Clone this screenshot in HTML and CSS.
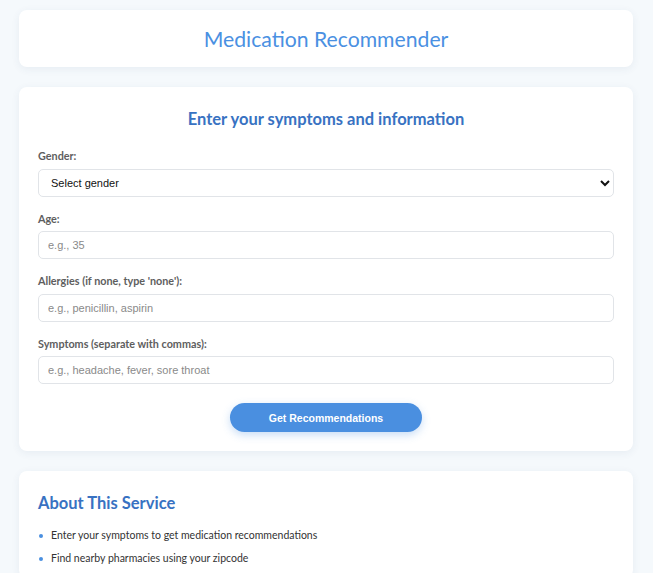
FILE: index.html
```html
<!DOCTYPE html>
<html lang="en">
<head>
<meta charset="utf-8">
<title>Medication Recommender</title>
<link rel="stylesheet" href="styles.css">
</head>
<body>
<div class="page">
  <header class="card header-card">
    <h1 class="title">Medication Recommender</h1>
  </header>

  <section class="card form-card">
    <h2 class="form-heading">Enter your symptoms and information</h2>
    <form class="form">
      <div class="group">
        <label class="label" for="gender">Gender:</label>
        <select class="field select" id="gender">
          <option>Select gender</option>
          <option>Male</option>
          <option>Female</option>
          <option>Other</option>
        </select>
      </div>
      <div class="group">
        <label class="label" for="age">Age:</label>
        <input class="field" id="age" type="text" placeholder="e.g., 35">
      </div>
      <div class="group">
        <label class="label" for="allergies">Allergies (if none, type 'none'):</label>
        <input class="field" id="allergies" type="text" placeholder="e.g., penicillin, aspirin">
      </div>
      <div class="group">
        <label class="label" for="symptoms">Symptoms (separate with commas):</label>
        <input class="field" id="symptoms" type="text" placeholder="e.g., headache, fever, sore throat">
      </div>
      <div class="actions">
        <button class="btn" type="button">Get Recommendations</button>
      </div>
    </form>
  </section>

  <section class="card about-card">
    <h2 class="about-heading">About This Service</h2>
    <ul class="list">
      <li>Enter your symptoms to get medication recommendations</li>
      <li>Find nearby pharmacies using your zipcode</li>
    </ul>
  </section>
</div>
</body>
</html>
```

FILE: styles.css
```css
* { box-sizing: border-box; }

html, body {
  margin: 0;
  padding: 0;
  background: #f5f9fc;
}

body {
  font-family: Lato, "Noto Sans", sans-serif;
  color: #333;
}

.page {
  padding: 10px 20px 20px 19px;
  display: flex;
  flex-direction: column;
  gap: 20px;
}

.card {
  background: #ffffff;
  border-radius: 8px;
  box-shadow: 0 2px 8px rgba(40, 70, 110, 0.07);
}

.header-card {
  height: 57px;
  display: flex;
  align-items: center;
  justify-content: center;
}

.title {
  margin: 0;
  font-size: 21.2px;
  font-weight: 400;
  color: #4a90e2;
  line-height: 26px;
}

.form-card {
  padding: 22px 19px 19px 19px;
}

.form-heading {
  margin: 0 0 20px 0;
  text-align: center;
  font-size: 16.5px;
  line-height: 20px;
  font-weight: 700;
  color: #3872c2;
}

.form {
  display: flex;
  flex-direction: column;
}

.group {
  display: flex;
  flex-direction: column;
  margin-bottom: 15px;
}

.label {
  font-size: 10.8px;
  line-height: 14px;
  font-weight: 700;
  color: #5e5e5e;
  margin-bottom: 5.5px;
}

.field {
  height: 28px;
  width: 100%;
  border: 1px solid #e1e4e8;
  border-radius: 5px;
  padding: 0 9px;
  font-family: "Liberation Sans", Arial, sans-serif;
  font-size: 11px;
  color: #222;
  background: #fff;
  outline: none;
}

.field::placeholder {
  color: #8a8a8a;
}

.select {
  padding: 0 6px 0 8px;
  color: #111;
}

.actions {
  display: flex;
  justify-content: center;
  padding-top: 4px;
}

.btn {
  width: 192px;
  height: 29px;
  border: none;
  border-radius: 15px;
  background: #4a8fe0;
  color: #fff;
  font-family: "Liberation Sans", Arial, sans-serif;
  font-size: 10.5px;
  font-weight: 700;
  box-shadow: 0 3px 8px rgba(74, 143, 224, 0.3);
  cursor: pointer;
}

.about-card {
  padding: 22px 19px 8px 19px;
}

.about-heading {
  margin: 0 0 11px 0;
  font-size: 16.5px;
  line-height: 20px;
  font-weight: 700;
  color: #3872c2;
}

.list {
  list-style: none;
  margin: 0;
  padding: 0;
}

.list li {
  position: relative;
  padding-left: 13px;
  font-size: 10.5px;
  line-height: 23px;
  color: #333;
}

.list li::before {
  content: "";
  position: absolute;
  left: 1px;
  top: 9.5px;
  width: 4px;
  height: 4px;
  border-radius: 50%;
  background: #4a8fe0;
}
```
